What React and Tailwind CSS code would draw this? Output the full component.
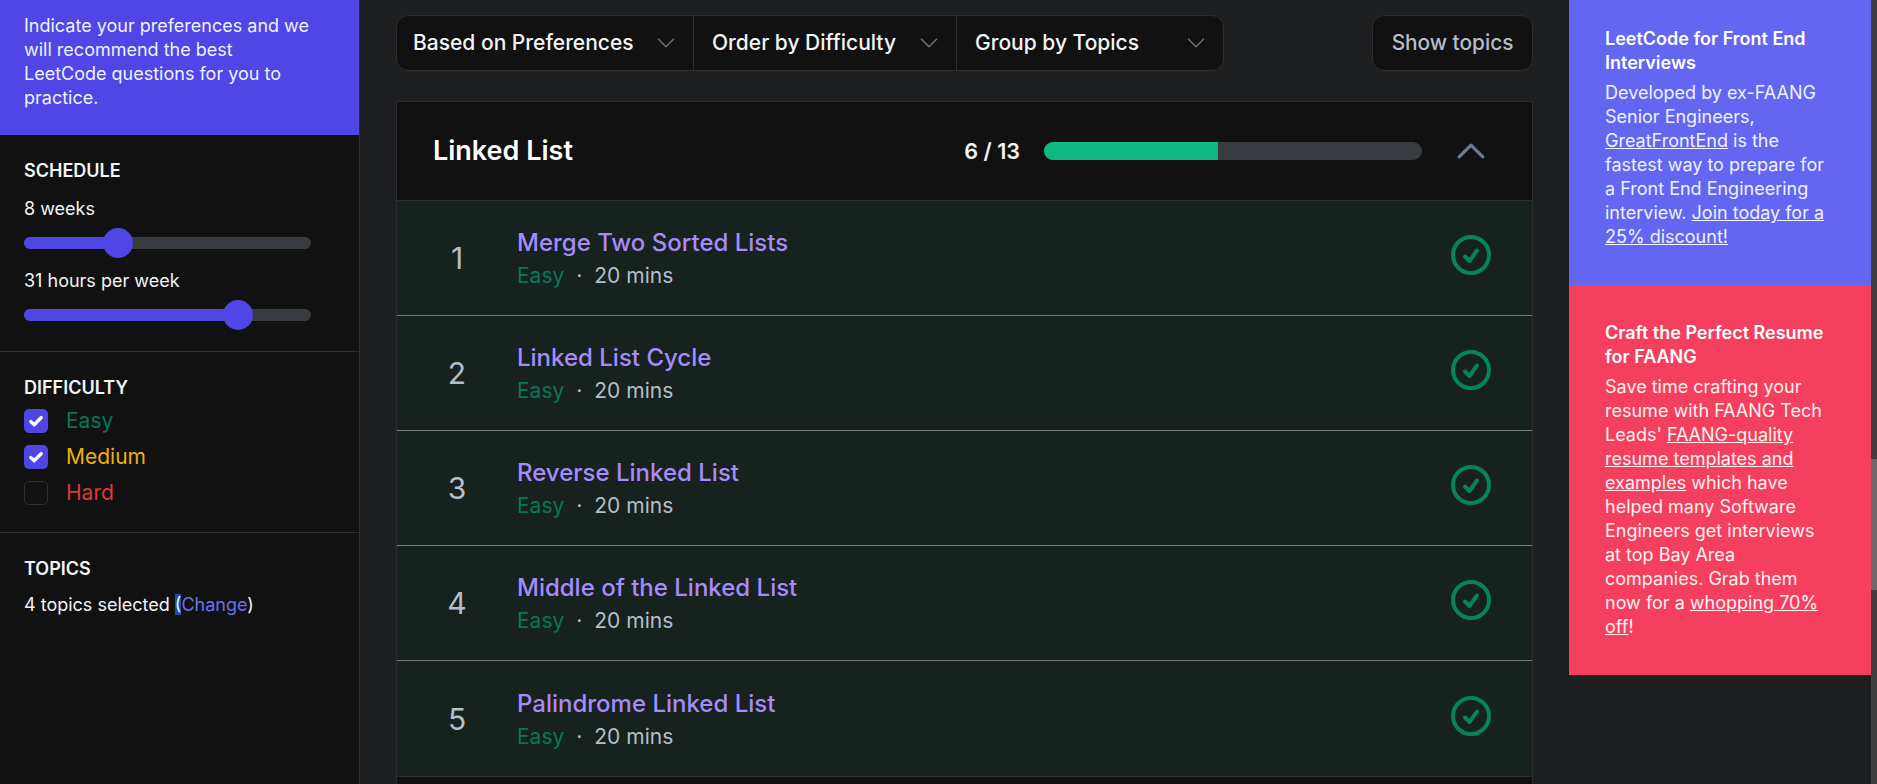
const questions = [
  { id: 1, title: 'Merge Two Sorted Lists' },
  { id: 2, title: 'Linked List Cycle' },
  { id: 3, title: 'Reverse Linked List' },
  { id: 4, title: 'Middle of the Linked List' },
  { id: 5, title: 'Palindrome Linked List' },
]

function Chevron({ up, className, width = 1.5 }) {
  return (
    <svg viewBox="0 0 24 24" fill="none" stroke="currentColor" strokeWidth={width} className={className}>
      <path strokeLinecap="round" strokeLinejoin="round" d={up ? 'M4.5 15.75l7.5-7.5 7.5 7.5' : 'M19.5 8.25l-7.5 7.5-7.5-7.5'} />
    </svg>
  )
}

function Slider({ left }) {
  return (
    <div className="relative h-3 w-[287px] rounded-full bg-[#383b40]">
      <div className="h-3 rounded-full bg-[#4f46e5]" style={{ width: left }} />
      <div className="absolute top-[-9px] h-[30px] w-[30px] rounded-full bg-[#4f46e5]" style={{ left: left - 15 }} />
    </div>
  )
}

function Check({ label, color, checked }) {
  return (
    <div className="flex h-6 items-center">
      {checked ? (
        <div className="flex h-6 w-6 items-center justify-center rounded-[5px] bg-[#4f46e5]">
          <svg viewBox="0 0 16 16" fill="none" stroke="white" strokeWidth="2.6" strokeLinecap="round" strokeLinejoin="round" className="h-5 w-5">
            <path d="M3.8 8.4l2.8 2.6 5.6-5.8" />
          </svg>
        </div>
      ) : (
        <div className="h-6 w-6 rounded-[5px] border border-[#2b2d30] bg-[#111112]" />
      )}
      <span className={`ml-[18px] text-[21px] leading-6 ${color}`}>{label}</span>
    </div>
  )
}

function Filter({ label, className, border }) {
  return (
    <div className={`flex h-full items-center justify-between pr-[15px] ${className} ${border ? 'border-r border-[#2b2d30]' : ''}`}>
      <span className="whitespace-nowrap text-[21px] font-medium text-[#f3f4f6]">{label}</span>
      <Chevron className="h-6 w-6 text-[#6b7280]" />
    </div>
  )
}

function Row({ q, last }) {
  return (
    <div className={`flex h-[115px] items-center bg-[#17211e] ${last ? '' : 'border-b border-[#767b7a]'}`}>
      <div className="w-[120px] text-center text-[30px] text-[#b5bec9]">{q.id}</div>
      <div className="flex-1">
        <div className="text-[24px] font-medium leading-[34px] text-[#a78bfa]">{q.title}</div>
        <div className="mt-[1px] flex items-center text-[21px] leading-[29px] text-[#b5bec9]">
          <span className="text-[#047857]">Easy</span>
          <span className="w-[30px] text-center">·</span>
          <span>20 mins</span>
        </div>
      </div>
      <svg viewBox="0 0 24 24" fill="none" stroke="currentColor" strokeWidth="2" className="mr-[37px] mb-[6px] h-12 w-12 text-[#05835a]">
        <path strokeLinecap="round" strokeLinejoin="round" d="M9 12.75L11.25 15 15 9.75M21 12a9 9 0 11-18 0 9 9 0 0118 0z" />
      </svg>
    </div>
  )
}

export default function App() {
  return (
    <div className="flex h-screen overflow-hidden bg-[#1e1f21] font-['Inter',sans-serif] text-[18px] leading-6 text-[#f3f4f6]">
      <aside className="w-[360px] shrink-0 border-r border-[#2b2d30] bg-[#111112]">
        <div className="h-[135px] bg-[#4f46e5] pl-6 pr-[45px] pt-[14px] text-[#eef2ff]">
          Indicate your preferences and we will recommend the best LeetCode questions for you to practice.
        </div>
        <section className="h-[217px] border-b border-[#2b2d30] px-6 pt-6">
          <h2 className="font-semibold uppercase">Schedule</h2>
          <p className="mt-[14px]">8 weeks</p>
          <div className="mt-4"><Slider left={94} /></div>
          <p className="mt-5">31 hours per week</p>
          <div className="mt-4"><Slider left={214} /></div>
        </section>
        <section className="h-[181px] border-b border-[#2b2d30] px-6 pt-6">
          <h2 className="font-semibold uppercase">Difficulty</h2>
          <div className="mt-[9px] flex flex-col gap-3">
            <Check label="Easy" color="text-[#047857]" checked />
            <Check label="Medium" color="text-[#eab308]" checked />
            <Check label="Hard" color="text-[#dc3a3a]" />
          </div>
        </section>
        <section className="px-6 pt-6">
          <h2 className="font-semibold uppercase">Topics</h2>
          <p className="mt-3">
            4 topics selected <span className="bg-[#1d4ea8]">(</span>
            <span className="text-[#6f70e8]">Change</span>)
          </p>
        </section>
      </aside>

      <main className="w-[1209px] shrink-0 px-9 pt-[15px]">
        <div className="flex items-center justify-between">
          <div className="flex h-[56px] w-[828px] rounded-xl border border-[#2b2d30] bg-[#111112]">
            <Filter label="Based on Preferences" className="w-[297px] pl-4" border />
            <Filter label="Order by Difficulty" className="w-[263px] pl-[18px]" border />
            <Filter label="Group by Topics" className="flex-1 pl-[18px]" />
          </div>
          <div className="flex h-[56px] w-[161px] items-center justify-center rounded-xl border border-[#2b2d30] bg-[#111112] text-[20.8px] font-medium text-[#b5bec9]">
            Show topics
          </div>
        </div>

        <div className="mt-[30px] border border-[#2b2d30] bg-[#111112]">
          <div className="flex h-[99px] items-center border-b border-[#2b2d30] pl-9 pr-[42px]">
            <h1 className="flex-1 text-[27px] font-semibold text-white">Linked List</h1>
            <span className="text-[21.6px] font-semibold">6 / 13</span>
            <div className="ml-6 h-[18px] w-[378px] overflow-hidden rounded-full bg-[#383b40]">
              <div className="h-full w-[174px] bg-[#10b981]" />
            </div>
            <Chevron up width={2} className="ml-[30px] h-[38px] w-[38px] text-[#6b7a90]" />
          </div>
          {questions.map((q, i) => <Row key={q.id} q={q} last={i === questions.length - 1} />)}
          <div className="h-[40px] border-t border-[#2b2d30]" />
        </div>
      </main>

      <aside className="w-[302px] shrink-0 text-white">
        <div className="h-[285px] bg-[#6366f1] pl-9 pr-[41px] pt-[27px]">
          <h3 className="font-semibold">LeetCode for Front End Interviews</h3>
          <p className="mt-[6px] text-[#eef2ff]">
            Developed by ex-FAANG Senior Engineers, <span className="underline">GreatFrontEnd</span> is the fastest way to prepare for a Front End Engineering interview. <span className="underline">Join today for a 25% discount!</span>
          </p>
        </div>
        <div className="h-[390px] bg-[#f43f5e] pl-9 pr-[41px] pt-9">
          <h3 className="font-semibold">Craft the Perfect Resume for FAANG</h3>
          <p className="mt-[6px] text-[#fff1f2]">
            Save time crafting your resume with FAANG Tech Leads' <span className="underline">FAANG-quality resume templates and examples</span> which have helped many Software Engineers get interviews at top Bay Area companies. Grab them now for a <span className="underline">whopping 70% off</span>!
          </p>
        </div>
      </aside>

      <div className="w-[6px] shrink-0 bg-[#3f3f3f] pt-[459px]">
        <div className="h-[131px] bg-[#6b6b6b]" />
      </div>
    </div>
  )
}
